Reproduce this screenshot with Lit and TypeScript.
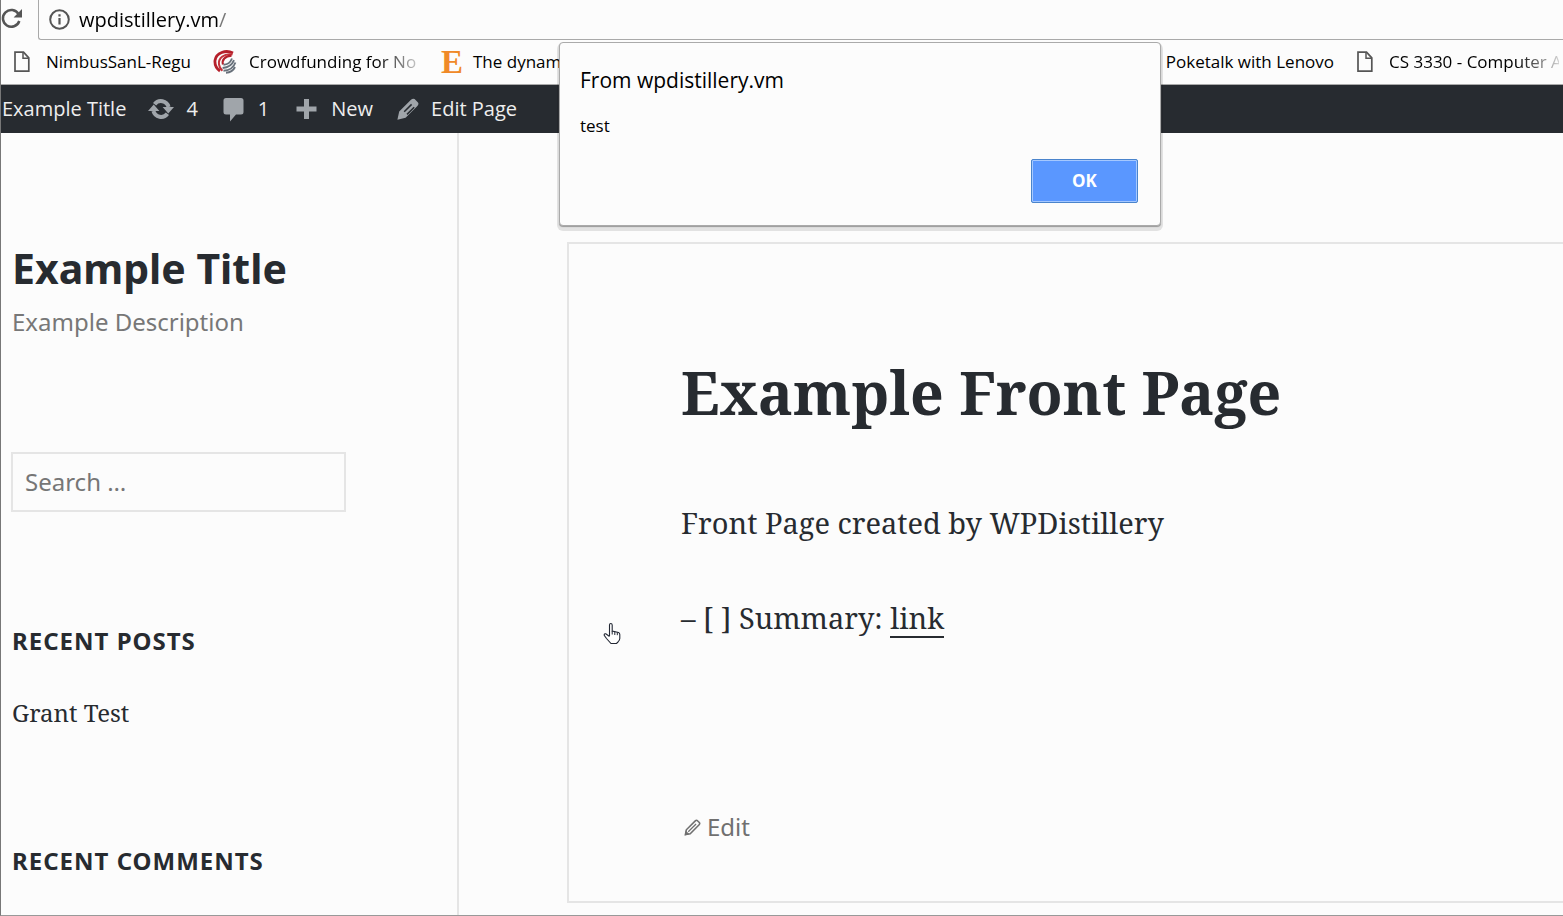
import { LitElement, html, css, svg } from "lit";
import { customElement } from "lit/decorators.js";

const pageIcon = html`<svg width="21" height="22" viewBox="0 0 21 22" aria-hidden="true">
  <path d="M2 1.2H10.5L15.8 6.8V20.2H2Z" fill="#fcfcfc" stroke="#555" stroke-width="1.7" />
  <path d="M10 1.5V7.2H15.8" fill="none" stroke="#555" stroke-width="1.5" />
</svg>`;

const solidPencil = svg`<path d="M14 1.8Q15.8 0 17.6 1L21 4.4Q22.2 6.2 20.4 8L8.6 19.8L0.4 21.8L2.2 13.6Z" />
  <path d="M7.2 13.8L14.6 6.4M10 16.4L17.2 9.2" stroke="#272b30" stroke-width="1.5" />`;

const outlinePencil = svg`<path d="M14.6 2.4Q16 1 17.4 2.2L19.8 4.6Q21 6 19.6 7.4L8 19L1.8 20.2L3 14Z" fill="none" stroke="#707070" stroke-width="2" />
  <path d="M5.5 16.5L15.6 6.4" stroke="#707070" stroke-width="1.6" /><path d="M1 21.2L2.2 15L7 19.8Z" fill="#707070" />`;

@customElement("app-root")
export class AppRoot extends LitElement {
  static styles = css`
    :host {
      display: block;
      --ink: #272b30;
      --rule: #e5e5e5;
      --paper: #fcfcfc;
      --ui: "Open Sans", "Noto Sans", sans-serif;
      --sans: "Noto Sans", "Open Sans", sans-serif;
      --serif: "Noto Serif", "Droid Serif", "DejaVu Serif", serif;
      color: var(--ink);
      background: var(--paper);
    }
    * { box-sizing: border-box; }
    a { color: inherit; text-decoration: none; }
    h1, h2, p { margin: 0; }
    .window {
      position: relative;
      display: flex;
      flex-direction: column;
      min-height: 100vh;
      border-left: 1px solid #777;
      border-bottom: 1px solid #999;
    }
    .toolbar { display: flex; height: 40px; }
    .reload { width: 37px; padding: 0 0 2px; border: 0; background: none; display: flex; align-items: center; }
    .address {
      flex: 1;
      display: flex;
      align-items: center;
      gap: 9px;
      padding-left: 10px;
      border: solid #a9a9a9;
      border-width: 0 0 1px 1px;
      border-bottom-left-radius: 3px;
    }
    .address input {
      flex: 1;
      height: 38px;
      padding: 0;
      border: 0;
      outline: 0;
      background: linear-gradient(90deg, #000 139px, #777 139px) text;
      color: transparent;
      font: 20px var(--ui);
    }
    .bookmarks {
      display: flex;
      justify-content: space-between;
      height: 45px;
      padding: 0 4px 0 12px;
      border-bottom: 1px solid #aaa;
      color: #000;
      font: 17px/46px var(--ui);
      white-space: nowrap;
    }
    .group { display: flex; gap: 22px; }
    .bookmark { display: flex; align-items: center; gap: 12px; }
    .fade { width: 170px; mask-image: linear-gradient(90deg, #000 128px, transparent 178px); }
    .shop { width: 20px; color: #f08a28; font: bold 33px/46px "Liberation Serif", serif; }
    .adminbar {
      display: flex;
      gap: 24px;
      height: 48px;
      padding-left: 1px;
      background: var(--ink);
      color: #eee;
      font: 20px/48px var(--ui);
    }
    .adminbar a { display: flex; align-items: center; gap: 12px; }
    .adminbar .home { margin-right: -2px; }
    .adminbar svg { fill: #a0a5aa; }
    .site { flex: 1; display: grid; grid-template-columns: 458px 1fr; }
    .sidebar { padding: 109px 10px 0 10px; border-right: 2px solid var(--rule); font-family: var(--sans); }
    .sidebar p, .sidebar h2 { padding-left: 1px; }
    .brand { font-size: 41px; line-height: 52px; font-weight: 700; }
    .tagline { margin-top: 12px; font-size: 24px; line-height: 32px; color: #777; }
    .search {
      display: block;
      width: 335px;
      height: 60px;
      margin: 114px 0 112px;
      padding: 0 12px 2px;
      border: 2px solid var(--rule);
      border-radius: 0;
      outline: 0;
      background: transparent;
      font: 24px var(--sans);
    }
    .search::placeholder { color: #767676; }
    .widget + .widget { margin-top: 115px; }
    .widget h2 { font-size: 24px; line-height: 34px; letter-spacing: 1px; text-transform: uppercase; }
    .widget p { margin-top: 39px; font: 24px/32px var(--serif); }
    .article {
      margin: 109px 0 12px 108px;
      padding: 110px 0 0 112px;
      border: 2px solid var(--rule);
      border-right: 0;
    }
    .article h1 { font: bold 59px/76px var(--serif); }
    .article p { font: 29px/48px var(--serif); }
    .intro { margin-top: 69px; }
    .summary { margin-top: 47px; }
    .summary a { display: inline-block; line-height: 36px; border-bottom: 2px solid var(--ink); }
    .edit { display: flex; align-items: center; gap: 6px; margin-top: 169px; padding-left: 3px; font: 24px/32px var(--sans); color: #707070; }
    .dialog {
      position: absolute;
      left: 558px;
      top: 42px;
      width: 602px;
      height: 184px;
      padding: 20px 22px 22px 20px;
      display: flex;
      flex-direction: column;
      border: 1px solid #aaa;
      border-radius: 4px;
      background: var(--paper);
      box-shadow: 0 1px 1px #999, 0 3px 0 2px rgba(0, 0, 0, 0.1);
      color: #000;
      font-family: var(--ui);
    }
    .dialog h2 { font-size: 21px; line-height: 34px; font-weight: 400; }
    .dialog p { margin-top: 17px; font-size: 17px; line-height: 24px; }
    .dialog button {
      align-self: flex-end;
      width: 107px;
      height: 44px;
      margin-top: auto;
      padding: 0 0 2px;
      border: 1px solid #4a84cc;
      border-radius: 2px;
      background: #5a97ff;
      box-shadow: inset 0 0 0 1px #a5c8ff;
      color: #fff;
      font: bold 17px var(--ui);
    }
    .pointer { position: absolute; left: 602px; top: 622px; }
  `;

  render() {
    return html`<div class="window">
      <div class="toolbar">
        <button class="reload" aria-label="Reload">
          <svg width="22" height="22" viewBox="0 0 22 22">
            <path d="M17.6 6.2A8.4 8.4 0 1 0 18.3 13" fill="none" stroke="#555" stroke-width="2.5" />
            <path d="M21 1V9.4H12.6Z" fill="#555" />
          </svg>
        </button>
        <div class="address">
          <svg width="21" height="21" viewBox="0 0 21 21" aria-hidden="true">
            <circle cx="10.5" cy="10.5" r="9.3" fill="none" stroke="#555" stroke-width="2" />
            <path d="M9.4 5.2H11.6V7.4H9.4ZM9.4 9H11.6V15.6H9.4Z" fill="#555" />
          </svg>
          <input aria-label="Address" .value=${"wpdistillery.vm/"} />
        </div>
      </div>
      <nav class="bookmarks" aria-label="Bookmarks">
        <div class="group">
          <a class="bookmark" href="#">${pageIcon}<span>NimbusSanL-Regu</span></a>
          <a class="bookmark" href="#">
            <svg width="24" height="24" viewBox="0 0 24 24" fill="none" aria-hidden="true">
              <path d="M20 3C13 -.5 3 2.5 2 10.5C1.6 15 3.5 18.6 7 21" stroke="#b5202b" stroke-width="2.8" />
              <path d="M19.5 4.4C11.5 3 5 8 6 14.5C6.4 17 7.4 19 9.4 20.8" stroke="#c4323a" stroke-width="2" />
              <path d="M18.5 5.6C12 6 8.6 10 10 14.5" stroke="#b5202b" stroke-width="2.2" />
              <path d="M10.5 14.8C14.5 14.6 17.6 12 19 8.5M9.6 18C15 17.6 19.4 14.4 21 10.2M10.5 20.8C16 20.6 20.8 17.4 22.4 12.5M13 22.8C17 22.6 20.5 20.2 22 17" stroke="#68717b" stroke-width="1.9" />
            </svg>
            <span class="fade">Crowdfunding for No</span>
          </a>
          <a class="bookmark" href="#"><span class="shop">E</span><span>The dynam</span></a>
        </div>
        <div class="group">
          <a class="bookmark" href="#"><span>Poketalk with Lenovo</span></a>
          <a class="bookmark" href="#">${pageIcon}<span class="fade">CS 3330 - Computer A</span></a>
        </div>
      </nav>
      <nav class="adminbar" aria-label="Admin">
        <a class="home" href="#">Example Title</a>
        <a href="#">
          <svg width="26" height="22" viewBox="0 0 26 22" aria-hidden="true">
            <path d="M6.6 6.2A8 8 0 0 1 20.6 9M19.4 15.8A8 8 0 0 1 5.4 13" fill="none" stroke="#a0a5aa" stroke-width="4" />
            <path d="M14.6 9H26L20.3 15.4ZM11.4 13H0L5.7 6.6Z" />
          </svg>4</a>
        <a href="#">
          <svg width="24" height="25" viewBox="0 0 24 25" aria-hidden="true">
            <path d="M4 1H19Q21.5 1 21.5 3.5V15Q21.5 17.5 19 17.5H14L8 24.5V17.5H4Q1.5 17.5 1.5 15V3.5Q1.5 1 4 1Z" />
          </svg>1</a>
        <a href="#">
          <svg width="26" height="22" viewBox="0 0 26 22" aria-hidden="true"><path d="M11 1H16V8.5H23.5V13.5H16V21H11V13.5H3.5V8.5H11Z" /></svg>New</a>
        <a href="#"><svg width="22" height="22" viewBox="0 0 22 22" aria-hidden="true">${solidPencil}</svg>Edit Page</a>
      </nav>
      <div class="site">
        <aside class="sidebar">
          <p class="brand"><a href="#">Example Title</a></p>
          <p class="tagline">Example Description</p>
          <input class="search" type="search" aria-label="Search" placeholder="Search …" />
          <section class="widget"><h2>Recent Posts</h2><p><a href="#">Grant Test</a></p></section>
          <section class="widget"><h2>Recent Comments</h2></section>
        </aside>
        <main class="article">
          <h1>Example Front Page</h1>
          <p class="intro">Front Page created by WPDistillery</p>
          <p class="summary">– [ ] Summary: <a href="#">link</a></p>
          <a class="edit" href="#"><svg width="17" height="17" viewBox="0 0 22 22" aria-hidden="true">${outlinePencil}</svg>Edit</a>
        </main>
      </div>
      <section class="dialog" role="dialog" aria-labelledby="origin">
        <h2 id="origin">From wpdistillery.vm</h2>
        <p>test</p>
        <button>OK</button>
      </section>
      <svg class="pointer" width="18" height="23" viewBox="0 0 18 23" aria-hidden="true">
        <path d="M6.5 14V3Q6.5 1.5 7.8 1.5T9.2 3V9L15.5 10.5Q16.8 11 16.8 12.5V16.5Q16.8 18 15 20L13.5 21.5H8L3.5 16.5L1.2 13.2Q1 11.5 2.8 11.8L6.5 14.5" fill="#fff" stroke="#222733" stroke-width="1.1" />
        <path d="M9.2 9V12.5M11.8 9.8V13M14.3 10.3V13.2" stroke="#222733" />
      </svg>
    </div>`;
  }
}
